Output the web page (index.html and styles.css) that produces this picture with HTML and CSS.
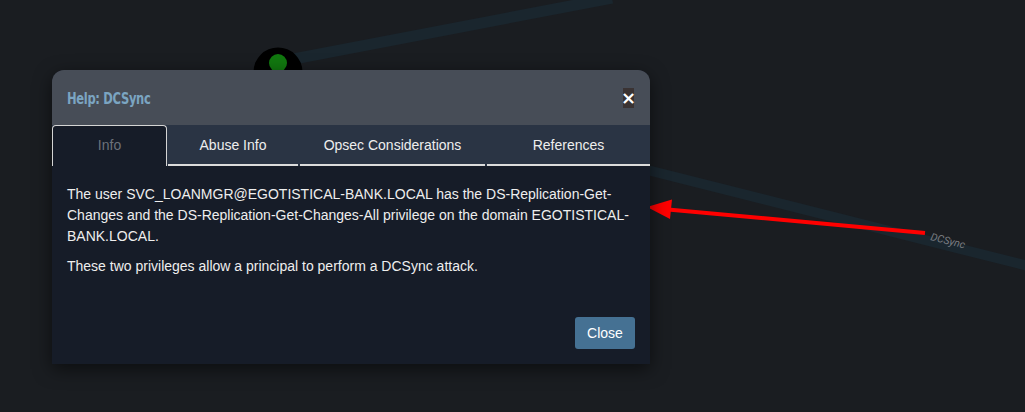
FILE: index.html
```html
<!DOCTYPE html>
<html>
<head>
<meta charset="utf-8">
<link rel="stylesheet" href="styles.css">
</head>
<body>
<div class="canvas">
  <svg class="graph" width="1025" height="412" viewBox="0 0 1025 412">
    <line x1="278" y1="62" x2="612" y2="-2" stroke="#1a262e" stroke-width="11"/>
    <line x1="560" y1="148" x2="1040" y2="269" stroke="#1a262e" stroke-width="10"/>
    <circle cx="278" cy="72" r="24.5" fill="#000"/>
    <circle cx="278" cy="63" r="9" fill="#11780f"/>
    <text class="edge-label" x="930" y="240" transform="rotate(14 930 240)">DCSync</text>
    <line x1="925" y1="233" x2="668" y2="209.5" stroke="#ff0000" stroke-width="4"/>
    <polygon points="647,207 672,199.5 670,219" fill="#ff0000"/>
  </svg>
</div>

<div class="modal">
  <div class="modal-header">
    <h4 class="modal-title">Help: DCSync</h4>
    <button class="close-x">×</button>
  </div>
  <div class="tabs">
    <div class="tab active">Info</div>
    <div class="tab">Abuse Info</div>
    <div class="tab">Opsec Considerations</div>
    <div class="tab">References</div>
  </div>
  <div class="modal-body">
    <p>The user SVC_LOANMGR@EGOTISTICAL-BANK.LOCAL has the DS-Replication-Get-Changes and the DS-Replication-Get-Changes-All privilege on the domain EGOTISTICAL-BANK.LOCAL.</p>
    <p>These two privileges allow a principal to perform a DCSync attack.</p>
  </div>
  <div class="modal-footer">
    <button class="btn">Close</button>
  </div>
</div>
</body>
</html>
```
FILE: styles.css
```css
html, body {
  margin: 0;
  padding: 0;
  width: 1025px;
  height: 412px;
  overflow: hidden;
  background: #1a1d21;
  font-family: "Liberation Sans", Arial, sans-serif;
}

.canvas {
  position: absolute;
  left: 0;
  top: 0;
  width: 1025px;
  height: 412px;
}

.graph {
  display: block;
}

.edge-label {
  font-family: "Roboto", "Liberation Sans", sans-serif;
  font-size: 10.5px;
  font-style: italic;
  fill: #7a7d82;
}

.modal {
  position: absolute;
  left: 52px;
  top: 70px;
  width: 598px;
  background: #161c28;
  border-radius: 12px 12px 0 0;
  box-shadow: 0 5px 18px rgba(0, 0, 0, 0.55);
  display: flex;
  flex-direction: column;
}

.modal-header {
  height: 55px;
  background: #474d57;
  border-radius: 12px 12px 0 0;
  display: flex;
  align-items: center;
  justify-content: space-between;
  padding: 0 15px 0 15px;
  box-sizing: border-box;
}

.modal-title {
  margin: 0;
  font-family: "DejaVu Sans Condensed", "DejaVu Sans", sans-serif;
  font-weight: bold;
  font-size: 16px;
  letter-spacing: -0.4px;
  color: #7ba5c2;
  transform: scaleX(0.8);
  transform-origin: left center;
  padding-top: 2px;
}

.close-x {
  width: 11px;
  height: 20px;
  padding: 0;
  border: 0;
  margin-right: 1px;
  margin-top: 1px;
  background: #3a3333;
  color: #ffffff;
  font-family: "DejaVu Sans", sans-serif;
  font-weight: bold;
  font-size: 18px;
  line-height: 20px;
  display: flex;
  align-items: center;
  justify-content: center;
  overflow: visible;
}

.tabs {
  display: flex;
  height: 41px;
  background: #2a3444;
}

.tab {
  display: flex;
  align-items: center;
  justify-content: center;
  font-size: 14px;
  color: #eeeeee;
  border-bottom: 2px solid #dcdcdc;
  box-sizing: border-box;
  margin-right: 2px;
}

.tab:nth-child(1) { width: 115px; margin-right: 1px; }
.tab:nth-child(2) { width: 130px; }
.tab:nth-child(3) { width: 185px; }
.tab:nth-child(4) { width: 163px; margin-right: 0; }

.tab.active {
  background: #161c28;
  color: #6c717a;
  border: 1px solid #d4d4d4;
  border-bottom: 0;
  border-radius: 4px 4px 0 0;
  padding-bottom: 2px;
}

.modal-body {
  padding: 18px 15px 0 15px;
  color: #eeeeee;
  font-size: 14px;
  line-height: 21px;
}

.modal-body p {
  margin: 0 0 9px 0;
}

.modal-footer {
  display: flex;
  justify-content: flex-end;
  padding: 31px 15px 15px 15px;
}

.btn {
  width: 60px;
  height: 32px;
  border: 0;
  border-radius: 3px;
  background: #457193;
  color: #ffffff;
  font-family: "Liberation Sans", Arial, sans-serif;
  font-size: 14px;
  padding: 0;
}
```
